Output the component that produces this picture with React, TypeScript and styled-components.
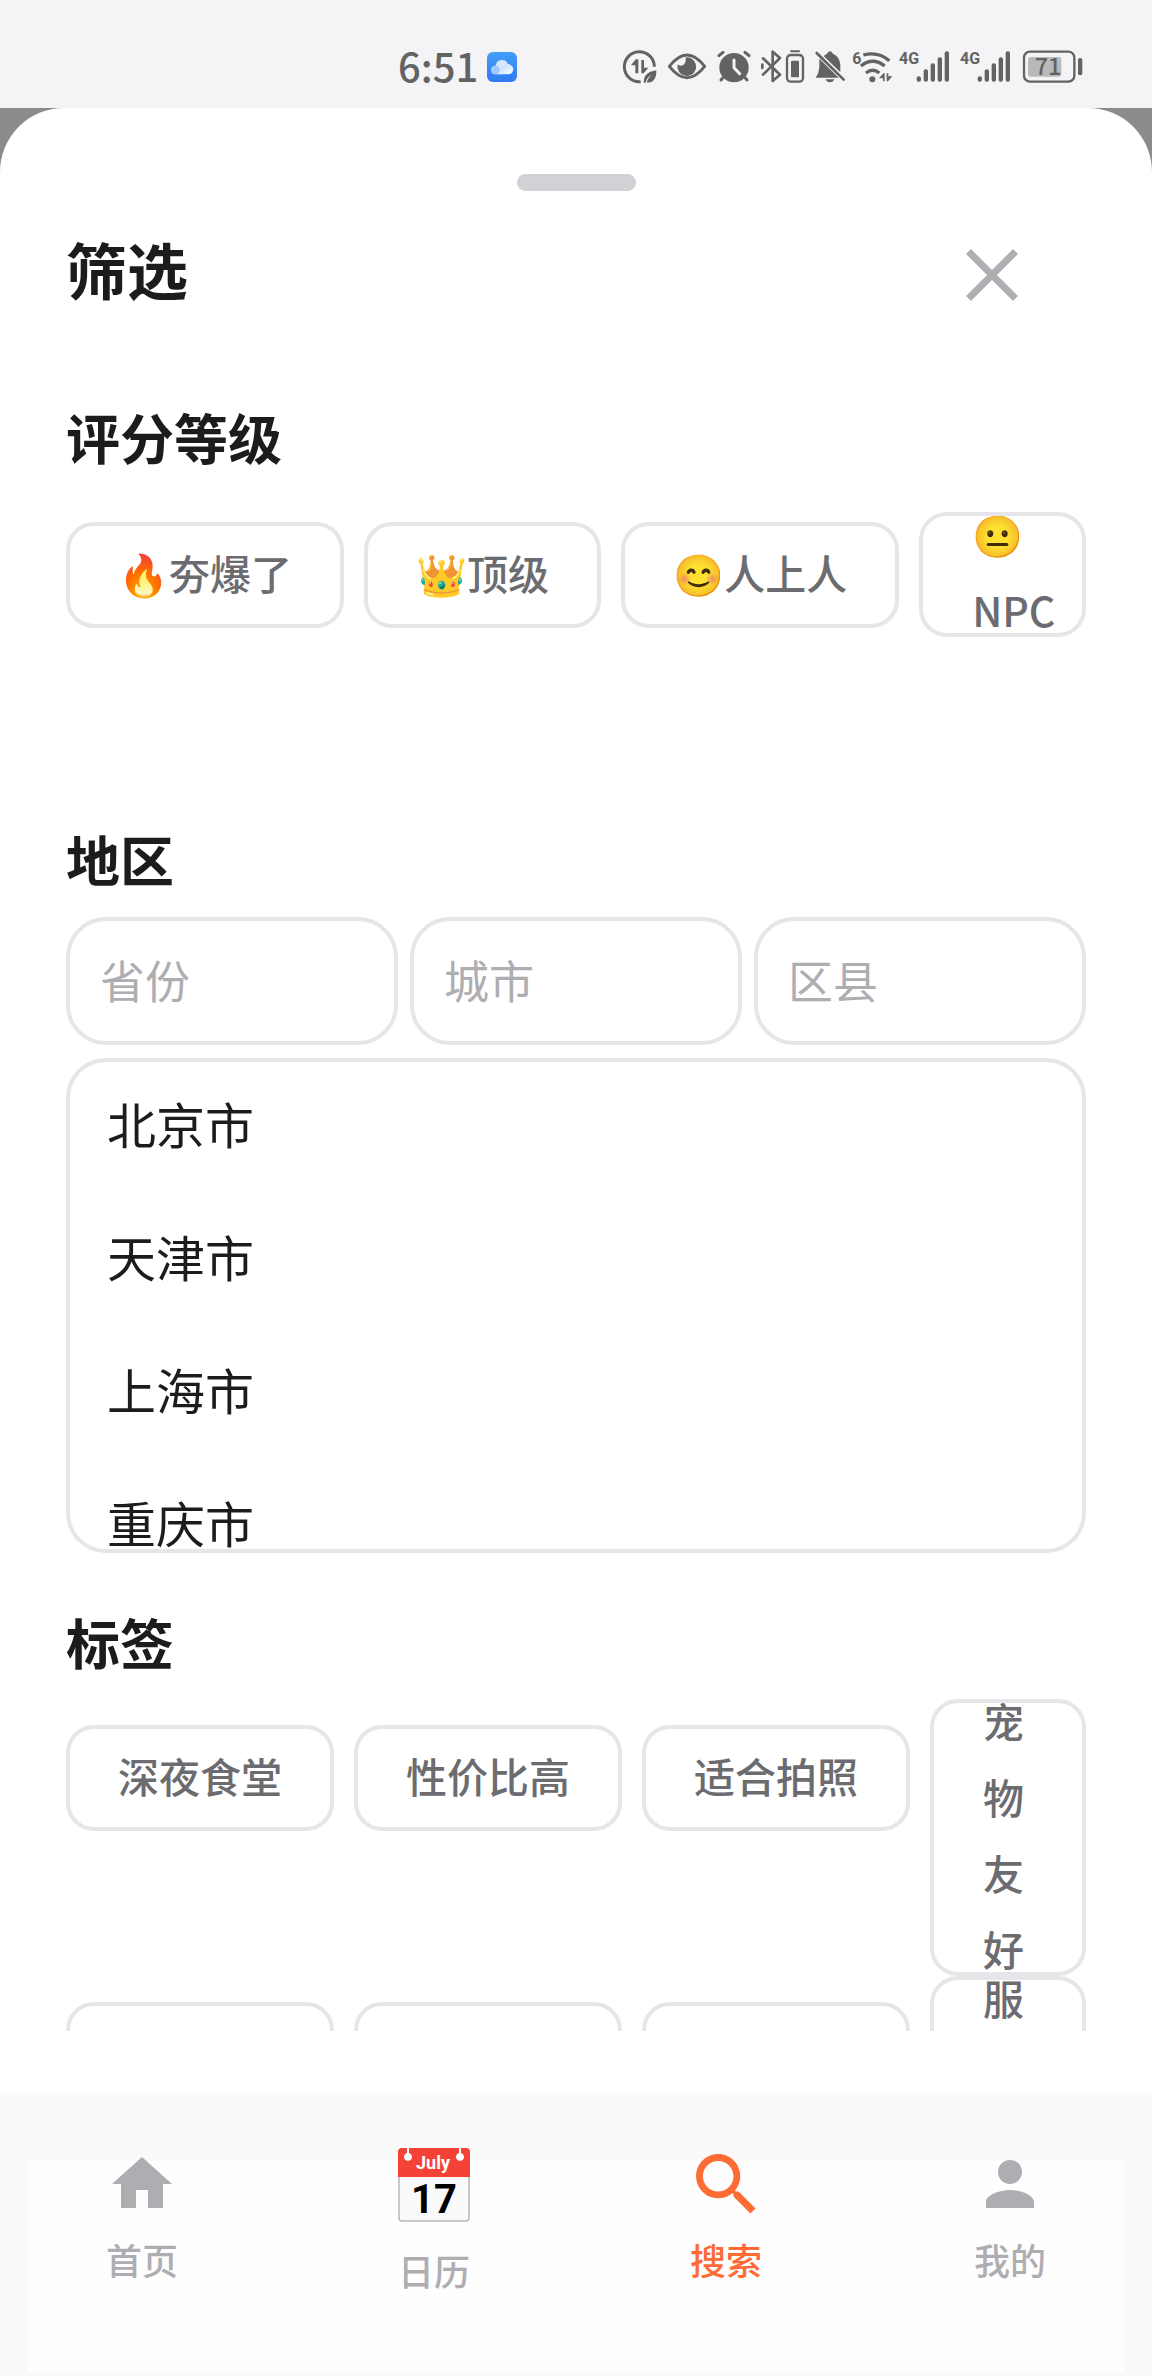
import React from 'react';
import styled, { createGlobalStyle, css } from 'styled-components';

const ink = '#1c1c1e';
const muted = '#aeaeb2';
const line = '#e5e5ea';
const tagInk = '#6c6c70';
const accent = '#ff6b35';
const statusInk = '#636363';
const statusBg = '#f4f4f7';

const GlobalStyle = createGlobalStyle`
  * { box-sizing: border-box; }
  body { margin: 0; background: #ffffff; }
  body, button, input {
    font-family: "Noto Sans CJK SC", "Noto Sans", "Noto Color Emoji", sans-serif;
  }
  h1, h2, ul, p { margin: 0; padding: 0; }
`;

const Screen = styled.div`
  display: flex;
  flex-direction: column;
  height: 100vh;
  overflow: hidden;
  background: #8b8b8b;
`;

const StatusBar = styled.header`
  display: flex;
  flex: none;
  align-items: center;
  height: 108px;
  padding: 26px 69px 0 398px;
  background: ${statusBg};
  color: ${statusInk};
`;

const Clock = styled.time`
  font-size: 40px;
  font-weight: 500;
  line-height: 52px;
  margin-top: -4px;
`;

const CloudIcon = styled.svg`
  width: 30px;
  height: 30px;
  margin-left: 9px;
`;

const StatusIcons = styled.div`
  display: flex;
  gap: 8px;
  margin-left: auto;
`;

const StatusSvg = styled.svg`
  display: block;
  height: 34px;
  overflow: visible;
`;

const Sheet = styled.main`
  display: flex;
  flex: 1;
  flex-direction: column;
  min-height: 0;
  padding-top: 66px;
  border-radius: 64px 64px 0 0;
  background: #ffffff;
`;

const Handle = styled.div`
  flex: none;
  align-self: center;
  width: 119px;
  height: 17px;
  border-radius: 9px;
  background: #d1d1d6;
`;

const SheetHeader = styled.div`
  display: flex;
  flex: none;
  justify-content: space-between;
  align-items: flex-start;
  padding: 37px 113px 0 66px;
`;

const SheetTitle = styled.h1`
  font-size: 61px;
  font-weight: 700;
  line-height: 82px;
  color: ${ink};
`;

const CloseButton = styled.button`
  display: grid;
  place-items: center;
  width: 94px;
  height: 94px;
  padding: 0;
  border: 0;
  background: none;
  color: ${muted};
`;

const Body = styled.div`
  flex: 1;
  min-height: 0;
  overflow: hidden;
  padding: 75px 66px 0;
  margin-bottom: 66px;
`;

const SectionTitle = styled.h2`
  font-size: 54px;
  font-weight: 700;
  line-height: 80px;
  color: ${ink};
`;

const RatingRow = styled.div`
  display: flex;
  align-items: center;
  gap: 20px;
  margin: 35px 0 182px;
`;

const TagRows = styled.div`
  margin-top: 17px;
`;

const TagRow = styled.div`
  display: flex;
  align-items: flex-start;
  gap: 20px;
  height: 277px;
`;

const PillText = styled.span`
  display: block;
`;

const Pill = styled.button<{ $narrow?: boolean; $drop?: boolean }>`
  flex: none;
  height: 106px;
  margin: 0;
  padding: 8px 48px 14px;
  overflow: hidden;
  border: 4px solid ${line};
  border-radius: 28px;
  background: #ffffff;
  color: ${tagInk};
  font-size: 41px;
  font-weight: 500;
  line-height: 76px;
  text-align: left;
  white-space: nowrap;
  ${(p) => p.$drop && css`margin-top: 26px;`}
  ${(p) =>
    p.$narrow &&
    css`
      flex: 1 1 0;
      min-width: 0;
      height: auto;
      padding: 0 49px;
      white-space: normal;
      ${PillText} {
        margin: -21px 0 -14px;
      }
    `}
`;

const EmptyPill = styled(Pill)`
  width: 268px;
`;

const TallPill = styled(Pill)`
  display: flex;
  align-items: flex-start;
  align-self: stretch;
`;

const RegionRow = styled.div`
  display: grid;
  grid-template-columns: repeat(3, 1fr);
  gap: 12px;
  margin-top: 18px;
`;

const RegionInput = styled.input`
  width: 100%;
  height: 128px;
  padding: 0 30px 4px;
  border: 4px solid ${line};
  border-radius: 40px;
  outline: none;
  background: #ffffff;
  color: ${ink};
  font-size: 45px;
  &::placeholder {
    color: ${muted};
    opacity: 1;
  }
`;

const Options = styled.ul`
  height: 495px;
  margin: 13px 0 49px;
  overflow: hidden;
  border: 4px solid ${line};
  border-radius: 40px;
  list-style: none;
`;

const Option = styled.li`
  padding: 24px 37px 36px;
  color: ${ink};
  font-size: 49px;
  line-height: 73px;
`;

const TabBar = styled.nav`
  display: flex;
  flex: none;
  justify-content: space-around;
  align-items: flex-start;
  padding: 51px 0 79px;
  background: linear-gradient(#fefefe, #fefefe) 28px 64px / calc(100% - 56px) calc(100% - 68px) no-repeat #fafafa;
  box-shadow: 0 -1px 6px rgba(0, 0, 0, 0.04);
`;

const Tab = styled.a<{ $active?: boolean }>`
  display: flex;
  flex-direction: column;
  align-items: center;
  gap: 12px;
  color: ${(p) => (p.$active ? accent : muted)};
  font-size: 36px;
  font-weight: 500;
  line-height: 54px;
  text-decoration: none;
`;

const TabIcon = styled.svg`
  display: block;
  width: 72px;
  height: 72px;
  fill: currentColor;
`;

const CalendarIcon = styled.svg`
  display: block;
  width: 88px;
  height: 83px;
`;

/* Status glyphs share one coordinate strip, three units to a pixel. */
function Glyph({ x, w, label, children }: { x: number; w: number; label: string; children: React.ReactNode }) {
  return (
    <StatusSvg
      width={w}
      viewBox={`${x * 3} 62 ${w * 3} 102`}
      role="img"
      aria-label={label}
      fill="none"
      stroke={statusInk}
      strokeWidth="9"
      strokeLinecap="round"
      strokeLinejoin="round"
    >
      {children}
    </StatusSvg>
  );
}

function SignalBars({ x }: { x: number }) {
  return (
    <g fill={statusInk} stroke="none">
      <text x={x - 2} y="105" fontSize="48" fontWeight="700" fontFamily="Roboto, sans-serif">4G</text>
      {[141, 120, 102, 84, 66].map((top, i) => (
        <rect key={top} x={x + 51 + i * 21} y={top} width="13" height={157 - top} rx="6" />
      ))}
    </g>
  );
}

function StatusGlyphs() {
  return (
    <StatusIcons>
      <Glyph x={22} w={38} label="省流量">
        <path d="M122 157A45 45 0 1 1 163 112" strokeLinecap="butt" />
        <path fill={statusInk} stroke="none" d="M93 108L107 90h8v42h-9v-24zM124 92h8v23h13l-14 17h-7z" />
        <path fill={statusInk} stroke="none" d="M132 161c-3-21 10-34 37-38 1 27-12 40-29 36 3-9 8-16 16-23-10 5-17 13-20 25z" />
      </Glyph>
      <Glyph x={68} w={40} label="护眼">
        <path d="M208 111q53-68 106 0q-53 68-106 0z" />
        <path fill={statusInk} stroke="none" d="M257 84a28 28 0 1 1-24 21c6 6 16 5 20-1 5-7 5-14 4-20z" />
      </Glyph>
      <Glyph x={116} w={37} label="闹钟">
        <circle cx="402" cy="115" r="44" fill={statusInk} stroke="none" />
        <path d="M357 79l12-10M435 69l12 10M368 146l-5 6M436 146l5 6" />
        <path d="M402 92v23l17 18" stroke={statusBg} />
      </Glyph>
      <Glyph x={161} w={45} label="蓝牙">
        <path strokeWidth="8" d="M489 87l51 49-22 19V67l22 19-51 50M487 106v10" />
        <rect x="561" y="77" width="48" height="80" rx="11" strokeWidth="7" />
        <path strokeWidth="6" d="M573 66h24" />
        <rect x="573" y="94" width="24" height="50" rx="3" fill={statusInk} stroke="none" />
      </Glyph>
      <Glyph x={214} w={31} label="静音">
        <path fill={statusInk} stroke="none" d="M658 88l58 57h-69q10-14 11-32zM671 80q6-5 10-7 9-14 18 0 20 8 22 34v22zM677 150h26q-3 9-13 9t-13-9z" />
        <path strokeWidth="8" d="M650 71l81 80" />
      </Glyph>
      <Glyph x={253} w={39} label="无线网络">
        <text x="757" y="104" fontSize="48" fontWeight="700" fontFamily="Roboto, sans-serif" fill={statusInk} stroke="none">6</text>
        <path strokeLinecap="butt" strokeWidth="10" d="M790 77q44-12 78 17M783 110q35-28 71 0M798 131q20-16 40 0" />
        <circle cx="817" cy="150" r="9" fill={statusInk} stroke="none" />
        <path fill={statusInk} stroke="none" d="M837 147l13-15h4v24h-5v-9zM860 132h5v9h12l-13 15h-4z" />
      </Glyph>
      <Glyph x={300} w={52} label="信号一">
        <SignalBars x={899} />
      </Glyph>
      <Glyph x={360} w={53} label="信号二">
        <SignalBars x={1082} />
      </Glyph>
      <Glyph x={421} w={62} label="电量">
        <rect x="1272" y="67" width="151" height="90" rx="18" strokeWidth="7" />
        <rect x="1284" y="83" width="100" height="59" rx="8" fill="#b9b9b9" stroke="none" />
        <rect x="1434" y="86" width="13" height="52" rx="6" fill={statusInk} stroke="none" />
        <text x="1344" y="138" fontSize="70" fontWeight="500" textAnchor="middle" fill={statusInk} stroke="none">71</text>
      </Glyph>
    </StatusIcons>
  );
}

const ratings = ['🔥夯爆了', '👑顶级', '😊人上人'];
const tags = ['深夜食堂', '性价比高', '适合拍照'];
const regions = ['省份', '城市', '区县'];
const provinces = ['北京市', '天津市', '上海市', '重庆市'];

export default function App() {
  return (
    <Screen>
      <GlobalStyle />
      <StatusBar>
        <Clock>6:51</Clock>
        <CloudIcon viewBox="0 0 90 90" role="img" aria-label="云空间">
          <defs>
            <linearGradient id="sky" x1="0" y1="0" x2="0" y2="1">
              <stop offset="0" stopColor="#439df8" />
              <stop offset="1" stopColor="#2f7bf2" />
            </linearGradient>
            <linearGradient id="cloud" x1="0" y1="0" x2="1" y2="1">
              <stop offset="0" stopColor="#b5d6fd" />
              <stop offset="1" stopColor="#ffffff" />
            </linearGradient>
          </defs>
          <rect width="90" height="90" rx="18" fill="url(#sky)" />
          <path fill="#d3e6fe" d="M25 67a13 13 0 0 1 1-26 19 19 0 0 1 37-4L40 67z" />
          <path fill="#9fc8fc" d="M25 67a13 13 0 1 1 13-14l-5 14z" />
          <path fill="url(#cloud)" d="M32 67c6-4 8-10 13-18 8-15 22-15 26-10a15 15 0 0 1-7 28z" />
        </CloudIcon>
        <StatusGlyphs />
      </StatusBar>

      <Sheet>
        <Handle />
        <SheetHeader>
          <SheetTitle>筛选</SheetTitle>
          <CloseButton aria-label="关闭">
            <svg width="52" height="52" viewBox="0 0 52 52" stroke="currentColor" strokeWidth="7">
              <path d="M2.500 2.500l47 47M49.500 2.500l-47 47" />
            </svg>
          </CloseButton>
        </SheetHeader>

        <Body>
          <SectionTitle>评分等级</SectionTitle>
          <RatingRow>
            {ratings.map((name) => (
              <Pill key={name}>
                <PillText>{name}</PillText>
              </Pill>
            ))}
            <Pill $narrow>
              <PillText>😐 NPC</PillText>
            </Pill>
          </RatingRow>

          <SectionTitle>地区</SectionTitle>
          <RegionRow>
            {regions.map((name) => (
              <RegionInput key={name} type="text" placeholder={name} aria-label={name} />
            ))}
          </RegionRow>
          <Options>
            {provinces.map((name) => (
              <Option key={name}>{name}</Option>
            ))}
          </Options>

          <SectionTitle>标签</SectionTitle>
          <TagRows>
            <TagRow>
              {tags.map((name) => (
                <Pill key={name} $drop>
                  <PillText>{name}</PillText>
                </Pill>
              ))}
              <Pill $narrow>
                <PillText>宠物友好</PillText>
              </Pill>
            </TagRow>
            <TagRow>
              <EmptyPill $drop aria-label="标签五" />
              <EmptyPill $drop aria-label="标签六" />
              <EmptyPill $drop aria-label="标签七" />
              <TallPill $narrow>
                <PillText>服</PillText>
              </TallPill>
            </TagRow>
          </TagRows>
        </Body>
      </Sheet>

      <TabBar>
        <Tab href="#home">
          <TabIcon viewBox="0 0 24 24" aria-hidden="true">
            <path d="M10 20v-6h4v6h5v-8h3L12 3 2 12h3v8z" />
          </TabIcon>
          首页
        </Tab>
        <Tab href="#calendar">
          <CalendarIcon viewBox="0 0 88 83" aria-hidden="true">
            <rect x="9" y="1" width="70" height="72" rx="3" fill="#fafafa" stroke="#b8b8b8" strokeWidth="1.500" />
            <path fill="#f44336" d="M8 29V4a4 4 0 0 1 4-4h64a4 4 0 0 1 4 4v25z" />
            <path fill="#ffffff" d="M17 0h2v5a4 4 0 1 1-2 0zM69 0h2v5a4 4 0 1 1-2 0z" />
            <text x="43" y="21" fontSize="18" fontWeight="700" fontFamily="Roboto, sans-serif" textAnchor="middle" fill="#ffffff">July</text>
            <text x="44" y="65" fontSize="40" fontWeight="700" fontFamily="Roboto, sans-serif" textAnchor="middle" fill="#000000">17</text>
          </CalendarIcon>
          日历
        </Tab>
        <Tab href="#search" $active aria-current="page">
          <TabIcon viewBox="1.200 1.200 21.200 21.200" aria-hidden="true">
            <path d="M15.500 14h-.79l-.28-.27C15.410 12.590 16 11.110 16 9.500 16 5.910 13.090 3 9.500 3S3 5.910 3 9.500 5.910 16 9.500 16c1.610 0 3.090-.59 4.230-1.570l.27.28v.79l5 4.990L20.490 19l-4.990-5zm-6 0C7.010 14 5 11.990 5 9.500S7.010 5 9.500 5 14 7.010 14 9.500 11.990 14 9.500 14z" />
          </TabIcon>
          搜索
        </Tab>
        <Tab href="#mine">
          <TabIcon viewBox="0 0 24 24" aria-hidden="true">
            <path d="M12 12c2.210 0 4-1.790 4-4s-1.790-4-4-4-4 1.790-4 4 1.790 4 4 4zm0 2c-2.670 0-8 1.340-8 4v2h16v-2c0-2.660-5.330-4-8-4z" />
          </TabIcon>
          我的
        </Tab>
      </TabBar>
    </Screen>
  );
}
